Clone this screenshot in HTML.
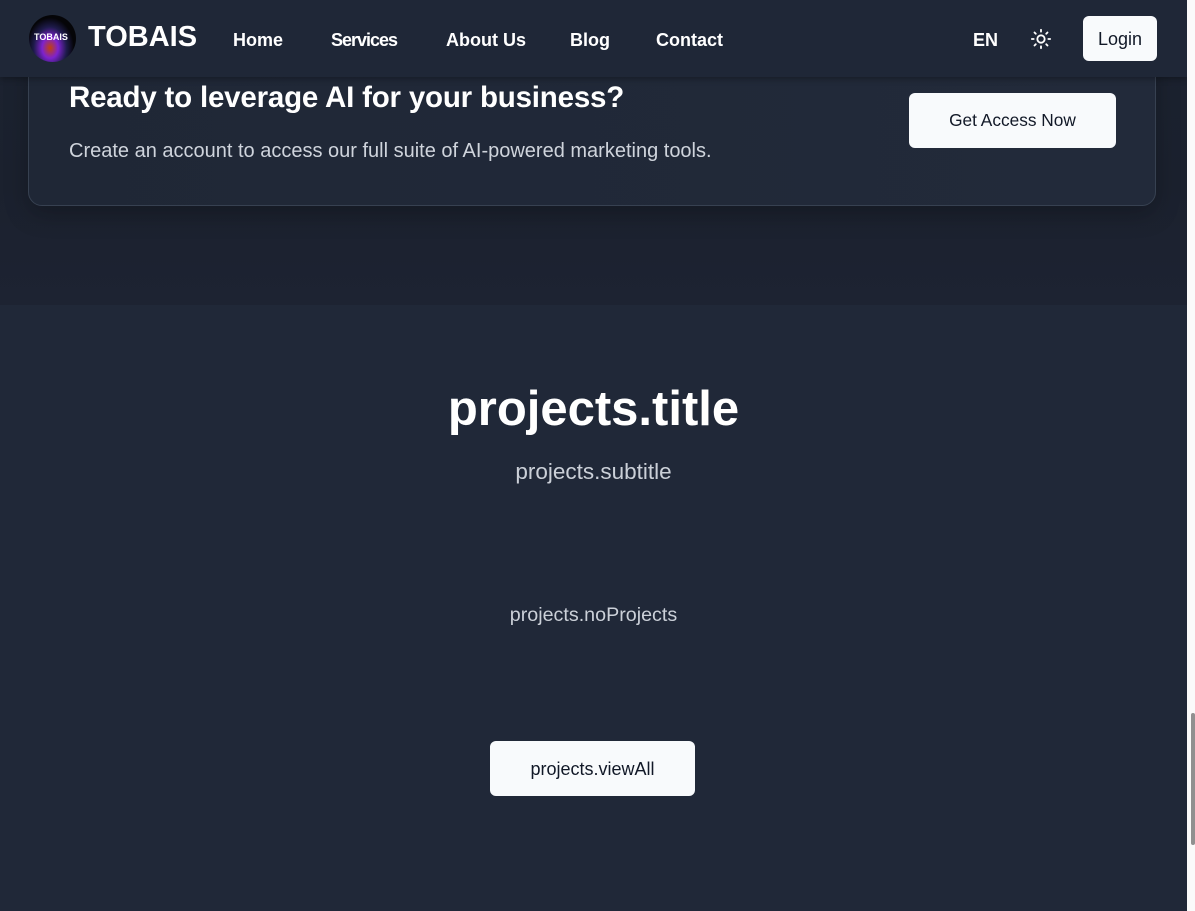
<!DOCTYPE html>
<html><head><meta charset="utf-8">
<style>
*{box-sizing:border-box;margin:0;padding:0}
html,body{width:1195px;height:911px;overflow:hidden;background:#202838;font-family:"Liberation Sans",sans-serif;}
.page{position:absolute;left:0;top:0;width:1187px;height:911px;background:#202838;}
.top{position:absolute;left:0;top:0;width:1187px;height:305px;background:linear-gradient(180deg,#1c2331,#1b212e 60%,#1d2332);}
.card{position:absolute;left:28px;top:40px;width:1128px;height:166px;border:1px solid #374151;border-radius:14px;background:linear-gradient(90deg,#1f2736,#222a3a);box-shadow:0 8px 24px rgba(0,0,0,.25);}
.card h2{position:absolute;left:40px;top:40px;color:#fff;font-size:29.5px;font-weight:bold;letter-spacing:-0.2px}
.card p{position:absolute;left:40px;top:99px;color:#cfd4dc;font-size:20px}
.btn{position:absolute;background:#f8fafc;color:#111827;border-radius:6px;text-align:center;font-size:18px}
.nav{position:absolute;left:0;top:0;width:1187px;height:77px;background:#1f2737;box-shadow:0 2px 6px rgba(0,0,0,.3)}
.logo{position:absolute;left:29px;top:15px;width:47px;height:47px;border-radius:50%;background:radial-gradient(ellipse at 45% 70%,#c2410c 0,#7e22ce 22%,#1e1b4b 45%,#050508 65%);}
.logo span{position:absolute;left:5px;top:17px;font-size:9px;color:#fff;font-weight:bold}
.brand{position:absolute;left:88px;top:21px;color:#fff;font-size:29px;font-weight:bold}
.nl{position:absolute;top:30px;color:#fff;font-size:18px;font-weight:bold}
h1{position:absolute;left:0;width:1187px;text-align:center;top:381px;color:#fff;font-size:49px;font-weight:bold}
.sub{position:absolute;left:0;width:1187px;text-align:center;top:459px;color:#cbd0d8;font-size:22.5px}
.np{position:absolute;left:0;width:1187px;text-align:center;top:604px;color:#cbd0d8;font-size:19.7px}
.sb{position:absolute;left:1187px;top:0;width:8px;height:911px;background:#fafafa}
.th{position:absolute;left:1191px;top:713px;width:4px;height:132px;background:#909090;border-radius:3px}
</style></head><body>
<div class="page">
<div class="top"></div>
<div class="card">
<h2>Ready to leverage AI for your business?</h2>
<p>Create an account to access our full suite of AI-powered marketing tools.</p>
</div>
<div class="btn" style="left:909px;top:93px;width:207px;height:55px;line-height:55px;font-size:17.3px">Get Access Now</div>
<div class="nav">
<div class="logo"><span>TOBAIS</span></div>
<div class="brand">TOBAIS</div>
<div class="nl" style="left:233px">Home</div>
<div class="nl" style="left:331px;letter-spacing:-1px">Services</div>
<div class="nl" style="left:446px">About Us</div>
<div class="nl" style="left:570px">Blog</div>
<div class="nl" style="left:656px">Contact</div>
<div class="nl" style="left:973px">EN</div>
<svg style="position:absolute;left:1030px;top:28px" width="22" height="22" viewBox="0 0 24 24" fill="none" stroke="#fff" stroke-width="2" stroke-linecap="round"><circle cx="12" cy="12" r="4"/><path d="M12 2v2M12 20v2M4.9 4.9l1.4 1.4M17.7 17.7l1.4 1.4M2 12h2M20 12h2M4.9 19.1l1.4-1.4M17.7 6.3l1.4-1.4"/></svg>
<div class="btn" style="left:1083px;top:16px;width:74px;height:45px;line-height:47px;font-size:18px">Login</div>
</div>
<h1>projects.title</h1>
<div class="sub">projects.subtitle</div>
<div class="np">projects.noProjects</div>
<div class="btn" style="left:490px;top:741px;width:205px;height:55px;line-height:57px;font-size:18px">projects.viewAll</div>
</div>
<div class="sb"></div><div class="th"></div>
</body></html>
